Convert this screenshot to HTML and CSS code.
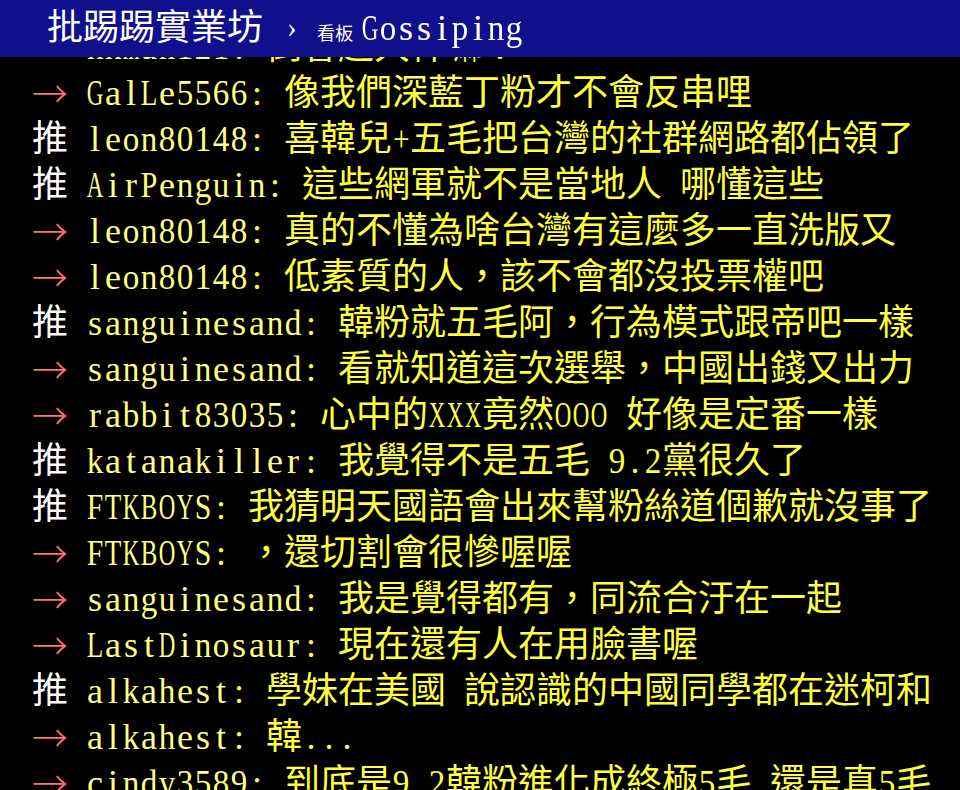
FILE: index.html
```html
<!DOCTYPE html>
<html lang="zh-Hant">
<head>
<meta charset="utf-8">
<title>看板 Gossiping - 批踢踢實業坊</title>
<link rel="stylesheet" href="styles.css">
</head>
<body>
<div class="topbar">
  <a class="logo" href="#">批踢踢實業坊</a>
  <span class="sep">›</span>
  <a class="board" href="#"><span class="board-label">看板</span><span class="board-name mono">Gossiping</span></a>
</div>
<main class="screen">
  <div class="push"><span class="tag arrow">→</span><span class="userid mono">kkman121</span><span class="content mono">: 倒會超大神嘛！</span></div>
  <div class="push"><span class="tag arrow">→</span><span class="userid mono">GalLe5566</span><span class="content mono">: 像我們深藍丁粉才不會反串哩</span></div>
  <div class="push"><span class="tag">推</span><span class="userid mono">leon80148</span><span class="content mono">: 喜韓兒+五毛把台灣的社群網路都佔領了</span></div>
  <div class="push"><span class="tag">推</span><span class="userid mono">AirPenguin</span><span class="content mono">: 這些網軍就不是當地人 哪懂這些</span></div>
  <div class="push"><span class="tag arrow">→</span><span class="userid mono">leon80148</span><span class="content mono">: 真的不懂為啥台灣有這麼多一直洗版又</span></div>
  <div class="push"><span class="tag arrow">→</span><span class="userid mono">leon80148</span><span class="content mono">: 低素質的人，該不會都沒投票權吧</span></div>
  <div class="push"><span class="tag">推</span><span class="userid mono">sanguinesand</span><span class="content mono">: 韓粉就五毛阿，行為模式跟帝吧一樣</span></div>
  <div class="push"><span class="tag arrow">→</span><span class="userid mono">sanguinesand</span><span class="content mono">: 看就知道這次選舉，中國出錢又出力</span></div>
  <div class="push"><span class="tag arrow">→</span><span class="userid mono">rabbit83035</span><span class="content mono">: 心中的XXX竟然OOO 好像是定番一樣</span></div>
  <div class="push"><span class="tag">推</span><span class="userid mono">katanakiller</span><span class="content mono">: 我覺得不是五毛 9.2黨很久了</span></div>
  <div class="push"><span class="tag">推</span><span class="userid mono">FTKBOYS</span><span class="content mono">: 我猜明天國語會出來幫粉絲道個歉就沒事了</span></div>
  <div class="push"><span class="tag arrow">→</span><span class="userid mono">FTKBOYS</span><span class="content mono">: ，還切割會很慘喔喔</span></div>
  <div class="push"><span class="tag arrow">→</span><span class="userid mono">sanguinesand</span><span class="content mono">: 我是覺得都有，同流合汙在一起</span></div>
  <div class="push"><span class="tag arrow">→</span><span class="userid mono">LastDinosaur</span><span class="content mono">: 現在還有人在用臉書喔</span></div>
  <div class="push"><span class="tag">推</span><span class="userid mono">alkahest</span><span class="content mono">: 學妹在美國 說認識的中國同學都在迷柯和</span></div>
  <div class="push"><span class="tag arrow">→</span><span class="userid mono">alkahest</span><span class="content mono">: 韓...</span></div>
  <div class="push"><span class="tag arrow">→</span><span class="userid mono">cindy3589</span><span class="content mono">: 到底是9.2韓粉進化成終極5毛 還是真5毛</span></div>
</main>
<script src="script.js"></script>
</body>
</html>
```

FILE: styles.css
```css
html, body {
  margin: 0;
  padding: 0;
  background: #000;
  overflow: hidden;
}

body {
  font-family: "Liberation Serif", "Noto Sans CJK TC", serif;
  color: #c0c0c0;
}

.topbar {
  position: fixed;
  top: 0;
  left: 0;
  right: 0;
  height: 57px;
  background: #10108c;
  padding-left: 47px;
  line-height: 57px;
  white-space: nowrap;
  z-index: 10;
}

.topbar a {
  color: #fff;
  text-decoration: none;
}

.logo {
  font-size: 36px;
  color: #ffffee;
}

.sep {
  display: inline-block;
  font-size: 30px;
  color: #fff;
  margin-left: 20px;
  margin-right: 16px;
  transform: translateY(-3px);
}

.board-label {
  font-size: 18px;
  margin-right: 8px;
}

.board-name {
  font-size: 36px;
}

.screen {
  display: block;
  padding: 24px 0 0 32px;
  font-size: 36px;
  line-height: 46px;
}

.push {
  height: 46px;
  white-space: pre;
}

.tag {
  display: inline-block;
  width: 1.5em;
  color: #fff;
}

.tag.arrow {
  font-family: "Noto Sans CJK TC", sans-serif;
  font-weight: 300;
  line-height: 36px;
  vertical-align: -3px;
  color: #ff7070;
}

.userid {
  color: #ffff80;
}

.content {
  color: #ffff40;
}

.hw {
  display: inline-flex;
  justify-content: center;
  width: 0.5em;
  white-space: pre;
}

.hw .g {
  display: inline-block;
  flex: none;
  white-space: pre;
}
```

FILE: script.js
```js
var cells = [];

document.querySelectorAll('.mono').forEach(function (el) {
  var walker = document.createTreeWalker(el, NodeFilter.SHOW_TEXT);
  var nodes = [];
  while (walker.nextNode()) nodes.push(walker.currentNode);
  nodes.forEach(function (node) {
    var frag = document.createDocumentFragment();
    var buf = '';
    Array.from(node.nodeValue).forEach(function (ch) {
      if (ch.charCodeAt(0) < 0x2000) {
        if (buf) {
          frag.appendChild(document.createTextNode(buf));
          buf = '';
        }
        var cell = document.createElement('span');
        cell.className = 'hw';
        var glyph = document.createElement('span');
        glyph.className = 'g';
        glyph.textContent = ch;
        cell.appendChild(glyph);
        frag.appendChild(cell);
        cells.push(cell);
      } else {
        buf += ch;
      }
    });
    if (buf) frag.appendChild(document.createTextNode(buf));
    node.parentNode.replaceChild(frag, node);
  });
});

cells.forEach(function (cell) {
  var glyph = cell.firstChild;
  var limit = cell.getBoundingClientRect().width * 0.92;
  var w = glyph.getBoundingClientRect().width;
  if (w > limit) {
    glyph.style.transform = 'scaleX(' + (limit / w).toFixed(3) + ')';
  }
});
```
